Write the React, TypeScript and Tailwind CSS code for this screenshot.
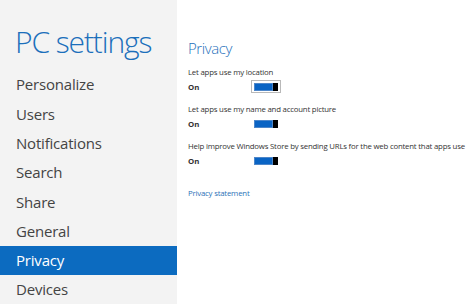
const navItems = [
  "Personalize",
  "Users",
  "Notifications",
  "Search",
  "Share",
  "General",
  "Privacy",
  "Devices",
];

const settings = [
  "Let apps use my location",
  "Let apps use my name and account picture",
  "Help improve Windows Store by sending URLs for the web content that apps use",
];

function Toggle({ focused }: { focused?: boolean }) {
  return (
    <div
      className={`flex h-[13px] w-[30px] items-center justify-center ${
        focused ? "border border-[#b9b9b9]" : "border border-transparent"
      }`}
    >
      <div className="flex h-[8px] w-[24px]">
        <div className="flex-1 bg-[#0a64c4] border border-[#4d86c9]" />
        <div className="w-[5px] bg-black" />
      </div>
    </div>
  );
}

export default function App() {
  return (
    <div
      className="flex h-[304px] w-[468px] overflow-hidden bg-white"
      style={{ fontFamily: '"Open Sans", "Noto Sans", sans-serif' }}
    >
      <aside className="flex w-[177px] shrink-0 flex-col bg-[#f3f3f3]">
        <h1 className="mt-[24px] pl-[15px] text-[30px] font-light leading-[36px] tracking-[-1.1px] text-[#1b6fbb]">
          PC settings
        </h1>
        <nav className="mt-[10px] flex flex-col">
          {navItems.map((item) => (
            <div
              key={item}
              className={`flex h-[29.3px] items-center pl-[16px] text-[15px] tracking-[-0.2px] ${
                item === "Privacy"
                  ? "bg-[#0c6bc0] text-white"
                  : "text-[#444444]"
              }`}
            >
              {item}
            </div>
          ))}
        </nav>
      </aside>

      <main className="flex-1 pl-[11px] pt-[38px]">
        <h2 className="text-[15px] font-light leading-[20px] tracking-[-0.4px] text-[#1d6fbb]">
          Privacy
        </h2>
        <div className="mt-[8px] flex flex-col gap-[10px]">
          {settings.map((label, i) => (
            <div key={label} className="flex flex-col">
              <div className="whitespace-nowrap text-[7.8px] leading-[12px] tracking-[-0.2px] text-[#333333]">
                {label}
              </div>
              <div className="mt-[2px] flex items-center">
                <span className="w-[63px] text-[7.8px] font-bold leading-[12px] text-[#333333]">
                  On
                </span>
                <Toggle focused={i === 0} />
              </div>
            </div>
          ))}
        </div>
        <div className="mt-[20px] text-[7.8px] leading-[12px] tracking-[-0.2px] text-[#2b72b8]">
          Privacy statement
        </div>
      </main>
    </div>
  );
}
